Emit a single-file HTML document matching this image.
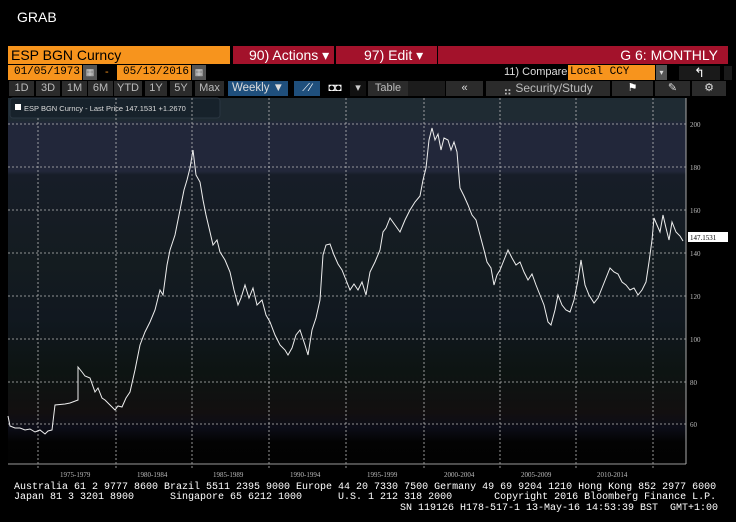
<!DOCTYPE html>
<html><head><meta charset="utf-8"><style>
body{margin:0;width:736px;height:522px;background:#000;position:relative;overflow:hidden;font-family:"Liberation Sans",sans-serif;color:#fff}
.a{position:absolute;box-sizing:border-box;white-space:nowrap}
.or{background:#f7941d;color:#000}
.rd{background:#a3122b;color:#fff}
.b{background:#2b2b2b;color:#bbb;font-size:11px;text-align:center;line-height:15px;top:81px;height:15px}
.m{font-family:"Liberation Mono",monospace}
</style></head><body>
<div class="a" style="left:17px;top:9px;font-size:14px">GRAB</div>
<div class="a or" style="left:8px;top:46px;width:222px;height:18px;font-size:14px;line-height:18px;padding-left:3px">ESP BGN Curncy</div>
<div class="a rd" style="left:233px;top:46px;width:101px;height:18px;font-size:14px;line-height:18px;padding-left:16px">90) Actions ▾</div>
<div class="a rd" style="left:336px;top:46px;width:101px;height:18px;font-size:14px;line-height:18px;padding-left:28px">97) Edit ▾</div>
<div class="a rd" style="left:438px;top:46px;width:290px;height:18px;font-size:14px;line-height:18px;text-align:right;padding-right:10px">G 6: MONTHLY</div>
<div class="a or m" style="left:8px;top:65px;width:74px;height:15px;font-size:11px;line-height:15px;text-align:right;padding-right:2px">01/05/1973</div>
<div class="a" style="left:83px;top:65px;width:14px;height:15px;background:#555;color:#ddd;font-size:9px;text-align:center;line-height:15px">▦</div>
<div class="a" style="left:105px;top:66px;font-size:11px;color:#f7941d">-</div>
<div class="a or m" style="left:117px;top:65px;width:74px;height:15px;font-size:11px;line-height:15px;text-align:right;padding-right:2px">05/13/2016</div>
<div class="a" style="left:192px;top:65px;width:14px;height:15px;background:#555;color:#ddd;font-size:9px;text-align:center;line-height:15px">▦</div>
<div class="a" style="left:504px;top:65px;font-size:11px;line-height:15px;color:#ddd">11) Compare</div>
<div class="a or m" style="left:568px;top:65px;width:87px;height:15px;font-size:11px;line-height:15px;padding-left:2px">Local CCY</div>
<div class="a" style="left:656px;top:65px;width:11px;height:15px;background:#555;color:#ddd;font-size:8px;text-align:center;line-height:15px">▾</div>
<div class="a" style="left:679px;top:66px;width:41px;height:14px;background:#1a1a1a;color:#fff;font-size:13px;text-align:center;line-height:14px">↰</div>
<div class="a" style="left:724px;top:66px;width:8px;height:14px;background:#1a1a1a"></div>
<div class="a b" style="left:9px;width:25px">1D</div>
<div class="a b" style="left:36px;width:24px">3D</div>
<div class="a b" style="left:62px;width:25px">1M</div>
<div class="a b" style="left:88px;width:25px">6M</div>
<div class="a b" style="left:114px;width:28px">YTD</div>
<div class="a b" style="left:145px;width:22px">1Y</div>
<div class="a b" style="left:170px;width:22px">5Y</div>
<div class="a b" style="left:195px;width:29px">Max</div>
<div class="a b" style="left:228px;width:60px;background:#1f4f7c;color:#ddd;font-size:11.5px">Weekly ▼</div>
<div class="a b" style="left:294px;width:26px;background:#1f4f7c;color:#fff">⟋⁄</div>
<div class="a b" style="left:322px;width:26px;background:#000;color:#fff">◘◘</div>
<div class="a b" style="left:350px;width:16px;background:#111;color:#ccc">▾</div>
<div class="a b" style="left:368px;width:40px;font-size:11px">Table</div>
<div class="a b" style="left:408px;width:37px;background:#1c1c1c;top:81px"></div>
<div class="a b" style="left:446px;width:37px;color:#ddd">«</div>
<div class="a b" style="left:486px;width:124px;color:#bbb;font-size:12px">⣤ Security/Study</div>
<div class="a b" style="left:612px;width:41px;color:#fff">⚑</div>
<div class="a b" style="left:655px;width:35px;color:#ddd">✎</div>
<div class="a b" style="left:692px;width:34px;color:#ddd">⚙</div>
<svg class="a" style="left:0;top:0" width="736" height="522">
<defs><linearGradient id="g" x1="0" y1="0" x2="0" y2="1">
<stop offset="0" stop-color="#1f2b33"/><stop offset="0.06" stop-color="#1f2b33"/>
<stop offset="0.07" stop-color="#22273a"/><stop offset="0.2" stop-color="#22273a"/>
<stop offset="0.21" stop-color="#171d28"/><stop offset="0.45" stop-color="#141c20"/>
<stop offset="0.6" stop-color="#111820"/><stop offset="0.75" stop-color="#0d1412"/>
<stop offset="0.86" stop-color="#120f10"/><stop offset="0.9" stop-color="#0c0d18"/>
<stop offset="0.94" stop-color="#030303"/><stop offset="1" stop-color="#020202"/></linearGradient></defs>
<rect x="8" y="98" width="678" height="366" fill="url(#g)"/>
<rect x="10" y="98" width="210" height="20" rx="3" fill="#17222b" stroke="#2a3540"/>
<rect x="15" y="104" width="6" height="6" fill="#fff"/>
<text x="24" y="111" font-size="7.5" fill="#ddd" font-family="Liberation Sans">ESP BGN Curncy - Last Price 147.1531  +1.2670</text>
<g stroke="#bbb" stroke-width="0.8" stroke-dasharray="2,2">
<line x1="8" y1="124" x2="686" y2="124"/><line x1="8" y1="167" x2="686" y2="167"/>
<line x1="8" y1="210" x2="686" y2="210"/><line x1="8" y1="253" x2="686" y2="253"/>
<line x1="8" y1="296" x2="686" y2="296"/><line x1="8" y1="339" x2="686" y2="339"/>
<line x1="8" y1="382" x2="686" y2="382"/><line x1="8" y1="424" x2="686" y2="424"/>
<line x1="38" y1="118" x2="38" y2="470"/><line x1="116" y1="98" x2="116" y2="470"/>
<line x1="192" y1="98" x2="192" y2="470"/><line x1="269" y1="98" x2="269" y2="470"/>
<line x1="346" y1="98" x2="346" y2="470"/><line x1="424" y1="98" x2="424" y2="470"/>
<line x1="500" y1="98" x2="500" y2="470"/><line x1="576" y1="98" x2="576" y2="470"/>
<line x1="653" y1="98" x2="653" y2="470"/></g>
<line x1="8" y1="464" x2="686" y2="464" stroke="#999"/>
<line x1="686" y1="98" x2="686" y2="464" stroke="#aaa"/>
<g font-size="7" fill="#bbb" font-family="Liberation Serif">
<text x="690" y="127">200</text><text x="690" y="170">180</text><text x="690" y="213">160</text>
<text x="690" y="256">140</text><text x="690" y="299">120</text><text x="690" y="342">100</text>
<text x="690" y="385">80</text><text x="690" y="427">60</text>
<text x="60" y="477">1975-1979</text><text x="137" y="477">1980-1984</text><text x="213" y="477">1985-1989</text>
<text x="290" y="477">1990-1994</text><text x="367" y="477">1995-1999</text><text x="444" y="477">2000-2004</text>
<text x="521" y="477">2005-2009</text><text x="597" y="477">2010-2014</text></g>
<rect x="688" y="232" width="40" height="10" fill="#fff"/>
<text x="690" y="240" font-size="7" fill="#000" font-family="Liberation Serif">147.1531</text>
<polyline fill="none" stroke="#eee" stroke-width="1" points="8,416 10,426 15,428 20,428 25,430 30,429 35,432 40,430 45,434 48,431 52,430 55,405 65,404 70,403 78,400 78,367 82,372 85,376 90,378 95,392 98,388 102,398 105,400 110,405 115,410 118,406 122,407 126,398 130,392 135,370 140,345 145,332 150,322 155,310 160,290 163,295 167,265 170,250 175,235 180,210 184,190 187,180 190,168 193,150 196,175 200,182 203,200 206,215 210,232 213,245 217,240 220,252 225,260 230,272 234,290 238,305 241,298 245,285 249,298 253,288 257,305 262,300 266,315 270,322 275,335 280,345 285,350 288,355 292,348 296,335 300,330 305,345 308,355 312,330 316,318 320,300 323,255 326,245 330,244 334,255 338,264 342,270 346,280 350,290 354,284 358,290 362,282 366,295 370,272 375,262 380,250 383,232 386,228 390,218 395,225 400,232 405,220 410,210 415,202 420,196 423,180 426,168 429,140 432,128 435,140 438,134 441,150 444,138 448,140 451,150 454,142 457,152 460,188 464,196 468,205 472,215 476,220 480,235 484,250 487,262 491,268 494,285 497,275 500,270 504,260 508,250 512,258 516,265 520,262 524,272 528,280 532,274 536,285 540,295 544,305 548,322 551,325 555,310 558,295 562,305 566,310 570,312 574,300 578,280 581,260 585,285 589,295 594,303 598,298 602,288 606,278 610,268 614,272 618,274 622,282 626,285 630,290 634,288 638,295 642,290 646,282 649,262 652,240 654,218 657,225 660,232 663,215 666,228 669,240 672,222 676,232 680,236 683,241"/>
</svg>
<div class="a m" style="left:14px;top:483px;font-size:10px;line-height:10px;color:#fff">Australia 61 2 9777 8600 Brazil 5511 2395 9000 Europe 44 20 7330 7500 Germany 49 69 9204 1210 Hong Kong 852 2977 6000</div>
<div class="a m" style="left:14px;top:493px;font-size:10px;line-height:10px;color:#fff">Japan 81 3 3201 8900&nbsp;&nbsp;&nbsp;&nbsp;&nbsp;&nbsp;Singapore 65 6212 1000&nbsp;&nbsp;&nbsp;&nbsp;&nbsp;&nbsp;U.S. 1 212 318 2000&nbsp;&nbsp;&nbsp;&nbsp;&nbsp;&nbsp;&nbsp;Copyright 2016 Bloomberg Finance L.P.</div>
<div class="a m" style="left:400px;top:504px;font-size:10px;line-height:10px;color:#fff">SN 119126 H178-517-1 13-May-16 14:53:39 BST&nbsp;&nbsp;GMT+1:00</div>
</body></html>
